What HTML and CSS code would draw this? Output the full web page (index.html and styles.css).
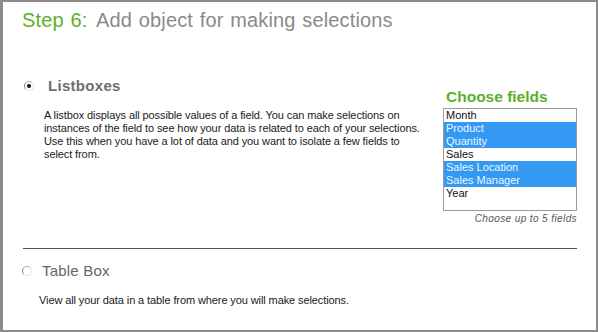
FILE: index.html
```html
<!DOCTYPE html>
<html lang="en">
<head>
    <meta charset="UTF-8">
    <title>Step 6: Add object for making selections</title>
    <link rel="stylesheet" href="styles.css">
</head>
<body>

<div class="frame">
    <h1 class="title"><span class="step">Step 6:</span> Add object for making selections</h1>

    <!-- Listbox option -->
    <div class="option-row">
        <div class="option">
            <div class="option-head">
                <span class="radio checked"></span>
                <span class="option-name">Listboxes</span>
            </div>
            <p class="desc">A listbox displays all possible values of a field. You can make selections on<br>
                instances of the field to see how your data is related to each of your selections.<br>
                Use this when you have a lot of data and you want to isolate a few fields to<br>
                select from.</p>
        </div>

        <div class="chooser">
            <div class="chooser-title">Choose fields</div>
            <ul class="fields">
                <li>Month</li>
                <li class="sel">Product</li>
                <li class="sel">Quantity</li>
                <li>Sales</li>
                <li class="sel">Sales Location</li>
                <li class="sel">Sales Manager</li>
                <li>Year</li>
            </ul>
            <div class="hint">Choose up to 5 fields</div>
        </div>
    </div>

    <hr class="divider">

    <!-- Table box option -->
    <div class="option second">
        <div class="option-head">
            <span class="radio"></span>
            <span class="option-name">Table Box</span>
        </div>
        <p class="desc">View all your data in a table from where you will make selections.</p>
    </div>
</div>

</body>
</html>
```

FILE: styles.css
```css
body {
    margin: 0;
    background: #ffffff;
    font-family: "Liberation Sans", Arial, sans-serif;
}
.frame {
    width: 598px;
    height: 332px;
    box-sizing: border-box;
    border: 2px solid #8c8c8c;
    border-left-width: 3px;
    background: #ffffff;
}
.title {
    margin: 0;
    padding: 7px 0 0 19px;
    font-size: 20px;
    font-weight: normal;
    color: #8a8a8a;
    letter-spacing: 0.15px;
    word-spacing: 1px;
}
.step {
    color: #5daf2b;
    margin-right: 3px;
}
.option-row {
    display: flex;
    justify-content: space-between;
    margin-top: 45px;
}
.option {
    padding-left: 21px;
}
.option-head {
    display: flex;
    align-items: center;
    gap: 14px;
}
.radio {
    width: 8px;
    height: 8px;
    border-radius: 50%;
    border: 1px solid #e2e2e2;
    border-left-color: #8a8a8a;
    border-top-color: #b0b0b0;
    position: relative;
    flex: none;
}
.radio.checked::after {
    content: "";
    position: absolute;
    left: 2px;
    top: 2px;
    width: 4px;
    height: 4px;
    border-radius: 50%;
    background: #111;
}
.option-name {
    font-size: 15px;
    font-weight: bold;
    color: #6e6e6e;
    letter-spacing: 0.3px;
}
.desc {
    margin: 15px 0 0 20px;
    font-size: 11px;
    line-height: 13px;
    color: #1a1a1a;
    letter-spacing: -0.1px;
    white-space: nowrap;
}
.chooser {
    margin: 11px 19px 0 0;
    width: 134px;
}
.chooser-title {
    font-size: 15.5px;
    font-weight: bold;
    color: #5daf2b;
    padding-left: 3px;
    margin-bottom: 2px;
}
.fields {
    list-style: none;
    margin: 0;
    padding: 0 0 10px;
    border: 1px solid #9a9a9a;
    font-size: 11px;
    line-height: 13px;
    color: #111;
}
.fields li {
    padding-left: 2px;
}
.fields li.sel {
    background: #3399f3;
    color: #eef6ff;
}
.hint {
    margin-top: 2px;
    text-align: right;
    font-size: 10px;
    font-style: italic;
    letter-spacing: 0.4px;
    color: #555;
}
.divider {
    margin: 24px 19px 0 20px;
    border: none;
    border-top: 1px solid #555555;
}
.second {
    margin-top: 13px;
    padding-left: 19px;
}
.second .option-head {
    gap: 10px;
}
.second .option-name {
    font-weight: normal;
    color: #666;
    letter-spacing: 0.2px;
}
.second .desc {
    margin: 15px 0 0 17px;
}
```
